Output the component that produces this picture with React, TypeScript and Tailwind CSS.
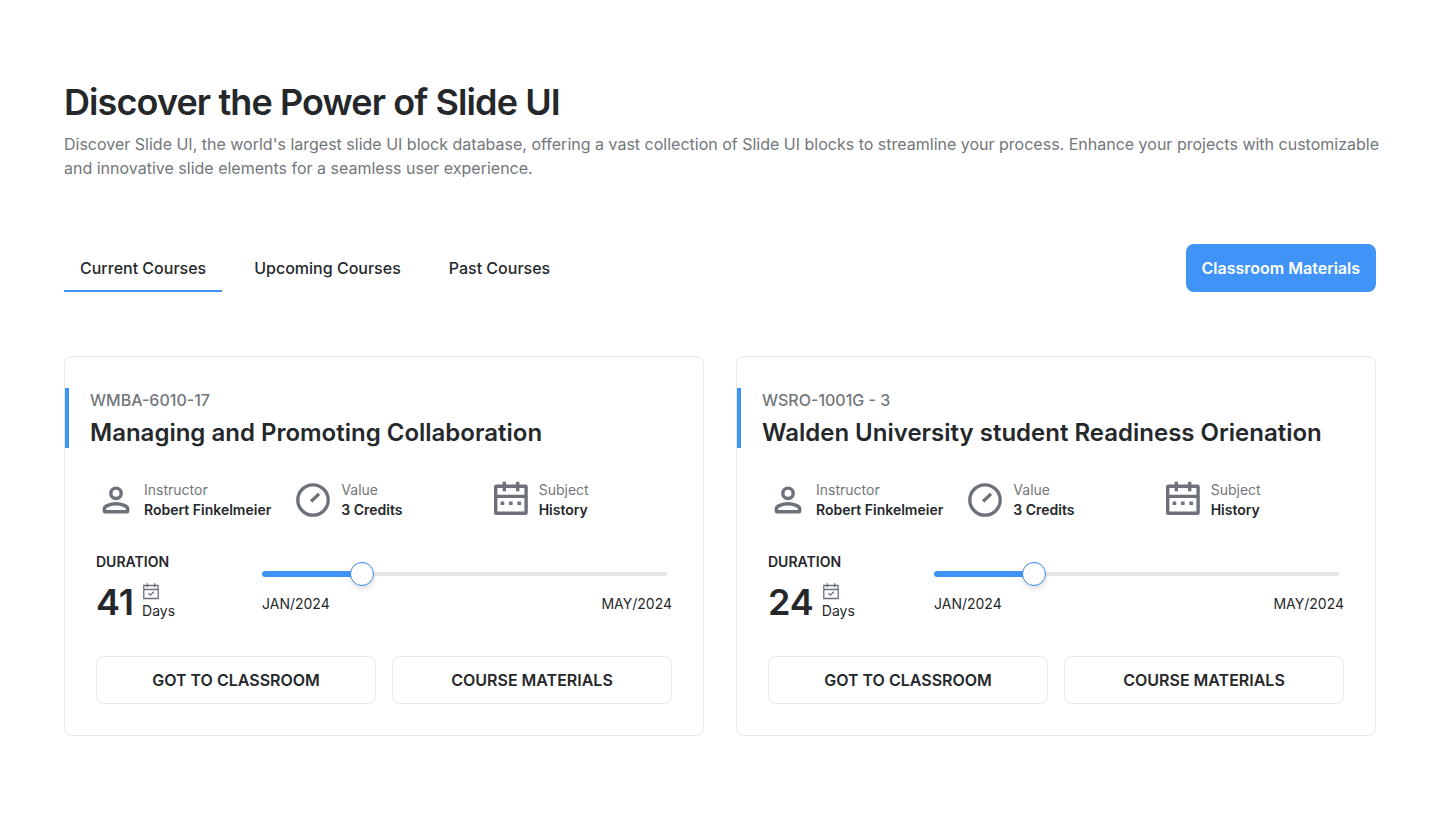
import { useState, type ReactNode } from "react";

type Course = {
  code: string;
  title: string;
  instructor: string;
  credits: string;
  subject: string;
  days: number;
  start: string;
  end: string;
  progress: number;
};

const courses: Course[] = [
  {
    code: "WMBA-6010-17",
    title: "Managing and Promoting Collaboration",
    instructor: "Robert Finkelmeier",
    credits: "3 Credits",
    subject: "History",
    days: 41,
    start: "JAN/2024",
    end: "MAY/2024",
    progress: 23,
  },
  {
    code: "WSRO-1001G - 3",
    title: "Walden University student Readiness Orienation",
    instructor: "Robert Finkelmeier",
    credits: "3 Credits",
    subject: "History",
    days: 24,
    start: "JAN/2024",
    end: "MAY/2024",
    progress: 23,
  },
];

const tabs = ["Current Courses", "Upcoming Courses", "Past Courses"];

function PersonIcon() {
  return (
    <svg viewBox="0 0 40 40" className="size-10 shrink-0" fill="none" stroke="currentColor" strokeWidth="3.4" aria-hidden="true">
      <circle cx="20" cy="13.3" r="5.2" />
      <path d="M8.300 30.800v-2.100c0-2.300 5.600-5 11.700-5s11.700 2.700 11.700 5v2.100c0 .5-.3.900-.9.900H9.200c-.6 0-.9-.4-.9-.9z" />
    </svg>
  );
}

function GaugeIcon() {
  return (
    <svg viewBox="0 0 40 40" className="size-10 shrink-0" fill="none" stroke="currentColor" strokeWidth="3.3" aria-hidden="true">
      <circle cx="20" cy="20" r="15.2" />
      <path d="M18.1 21.5 26 13.900" />
    </svg>
  );
}

function CalendarIcon() {
  return (
    <svg viewBox="0 0 40 40" className="size-10 shrink-0" fill="none" stroke="currentColor" strokeWidth="3.4" aria-hidden="true">
      <rect x="4.7" y="6.2" width="30.400" height="27.100" rx=".6" />
      <path d="M5 16.400h30M13.300 1.700v9.600M26.700 1.700v9.600" />
      <path d="M9.600 23.300h3.600M18 23.300h3.600M26.400 23.300h3.600" strokeWidth="3.600" />
    </svg>
  );
}

function CalendarCheckIcon() {
  return (
    <svg viewBox="0 0 18 18" className="size-[18px] text-[#6c717a]" fill="none" stroke="currentColor" strokeWidth="1.3" aria-hidden="true">
      <path d="M1.800 2.500h14.400v13H1.800zM1.800 6.500h14.400M5.300.3v4M12.700.3v4M6.400 10.200l2 2 3.400-3.400" />
    </svg>
  );
}

function Fact({ icon, label, value }: { icon: ReactNode; label: string; value: string }) {
  return (
    <div className="flex items-center gap-2">
      <span className="text-[#6c717a]">{icon}</span>
      <dl className="whitespace-nowrap text-sm leading-5">
        <dt className="text-[#72777a]">{label}</dt>
        <dd className="font-semibold">{value}</dd>
      </dl>
    </div>
  );
}

function ProgressSlider({ label, initial }: { label: string; initial: number }) {
  const [value, setValue] = useState(initial);
  return (
    <div className="relative mr-[5px] flex h-6 items-center">
      <div className="h-1 w-full bg-[#e6e6e7]" />
      <div className="absolute left-0 h-1.5 rounded-full bg-[#4094f7]" style={{ width: `calc(12px + (100% - 24px) * ${value / 100})` }} />
      <input
        type="range"
        aria-label={label}
        min={0}
        max={100}
        value={value}
        onChange={(e) => setValue(Number(e.target.value))}
        className="absolute inset-0 h-6 w-full cursor-pointer appearance-none bg-transparent [&::-webkit-slider-thumb]:size-6 [&::-webkit-slider-thumb]:appearance-none [&::-webkit-slider-thumb]:rounded-full [&::-webkit-slider-thumb]:border [&::-webkit-slider-thumb]:border-[#2f88f5] [&::-webkit-slider-thumb]:bg-white [&::-webkit-slider-thumb]:shadow-[0_3px_5px_rgba(0,0,0,0.12)]"
      />
    </div>
  );
}

function CourseCard({ course }: { course: Course }) {
  return (
    <article className="rounded-lg border border-[#e8e8ea] py-[31px]">
      <header className="flex flex-col gap-1.5 border-l-4 border-[#4094f7] pl-[21px]">
        <p className="text-base font-medium leading-6 text-[#72777a]">{course.code}</p>
        <h2 className="text-2xl font-semibold leading-[30px]">{course.title}</h2>
      </header>
      <div className="mt-8 flex flex-col gap-8 px-[31px]">
        <div className="grid grid-cols-3 gap-4">
          <Fact icon={<PersonIcon />} label="Instructor" value={course.instructor} />
          <Fact icon={<GaugeIcon />} label="Value" value={course.credits} />
          <Fact icon={<CalendarIcon />} label="Subject" value={course.subject} />
        </div>
        <div className="flex items-center">
          <div className="w-[166px] shrink-0">
            <h3 className="text-sm font-semibold leading-5">DURATION</h3>
            <div className="mt-2 flex h-11 items-center gap-2">
              <span className="text-4xl font-semibold leading-[44px]">{course.days}</span>
              <span className="flex flex-col text-sm leading-5">
                <CalendarCheckIcon />
                Days
              </span>
            </div>
          </div>
          <div className="flex-1">
            <ProgressSlider label={`${course.title} progress`} initial={course.progress} />
            <div className="mt-2 flex justify-between text-sm leading-5">
              <span>{course.start}</span>
              <span>{course.end}</span>
            </div>
          </div>
        </div>
        <div className="grid grid-cols-2 gap-4">
          <button type="button" className="h-12 rounded-lg border border-[#e8e8ea] font-semibold">
            GOT TO CLASSROOM
          </button>
          <button type="button" className="h-12 rounded-lg border border-[#e8e8ea] font-semibold">
            COURSE MATERIALS
          </button>
        </div>
      </div>
    </article>
  );
}

export default function App() {
  const [active, setActive] = useState(tabs[0]);
  return (
    <main className="min-h-screen bg-white px-16 py-20 font-['Inter',sans-serif] text-[#25282b]">
      <h1 className="text-4xl font-semibold leading-[44px] tracking-tight">Discover the Power of Slide UI</h1>
      <p className="-mr-2 mt-2 text-base leading-6 text-[#72777a]">
        Discover Slide UI, the world's largest slide UI block database, offering a vast collection of Slide UI blocks to streamline your process. Enhance your projects with customizable and innovative slide elements for a seamless user experience.
      </p>
      <div className="mt-16 flex items-center justify-between">
        <div role="tablist" className="flex gap-4">
          {tabs.map((tab) => (
            <button
              key={tab}
              type="button"
              role="tab"
              aria-selected={tab === active}
              onClick={() => setActive(tab)}
              className={`h-12 border-y-2 border-t-transparent px-4 font-medium ${tab === active ? "border-b-[#4094f7]" : "border-b-transparent"}`}
            >
              {tab}
            </button>
          ))}
        </div>
        <button type="button" className="h-12 rounded-lg bg-[#4094f7] px-4 font-semibold text-white">
          Classroom Materials
        </button>
      </div>
      <section className="mt-16 grid grid-cols-2 gap-8">
        {courses.map((course) => (
          <CourseCard key={course.code} course={course} />
        ))}
      </section>
    </main>
  );
}
